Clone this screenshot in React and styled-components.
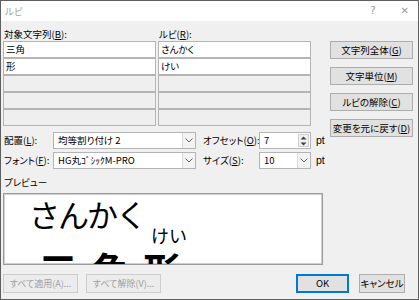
import React from "react";
import styled, { createGlobalStyle } from "styled-components";

const GlobalStyle = createGlobalStyle`
  html, body {
    margin: 0;
    padding: 0;
    background: #fff;
  }
  body {
    font-family: "Noto Sans CJK JP", "Noto Sans", sans-serif;
    font-size: 9.5px;
    font-feature-settings: "palt";
    color: #000;
  }
  * {
    box-sizing: border-box;
  }
`;

const rows = [
  { base: "三角", ruby: "さんかく" },
  { base: "形", ruby: "けい" },
  null,
  null,
  null,
];

const sideButtons = [
  ["文字列全体(", "G", ")"],
  ["文字単位(", "M", ")"],
  ["ルビの解除(", "C", ")"],
  ["変更を元に戻す(", "D", ")"],
];

const Chevron = () => (
  <svg width="8" height="5" viewBox="0 0 8 5">
    <path d="M0.5 0.5 L4 4 L7.5 0.5" fill="none" stroke="#606060" strokeWidth="1" />
  </svg>
);

const Spinner = () => (
  <svg width="7" height="12" viewBox="0 0 7 12">
    <path d="M0.5 4.5 L3.5 1.5 L6.5 4.5 Z" fill="#404040" />
    <path d="M0.5 7.5 L3.5 10.5 L6.5 7.5 Z" fill="#404040" />
  </svg>
);

const App = () => {
  return (
    <>
      <GlobalStyle />
      <Window>
        <TitleBar>
          <Title>ルビ</Title>
          <TitleIcons>
            <TitleIcon>?</TitleIcon>
            <TitleIcon>✕</TitleIcon>
          </TitleIcons>
        </TitleBar>

        <Body>
          <Main>
            <LeftColumn>
              <HeadRow>
                <span>
                  対象文字列(<U>B</U>):
                </span>
                <span>
                  ルビ(<U>R</U>):
                </span>
              </HeadRow>
              <Table>
                {rows.map((r, i) => (
                  <React.Fragment key={i}>
                    <Cell $empty={!r}>{r ? r.base : ""}</Cell>
                    <Cell $empty={!r}>{r ? r.ruby : ""}</Cell>
                  </React.Fragment>
                ))}
              </Table>

              <ControlRows>
                <ControlRow>
                  <Label $w={49}>
                    配置(<U>L</U>):
                  </Label>
                  <Select $w={143}>
                    <SelectText>均等割り付け 2</SelectText>
                    <DropButton>
                      <Chevron />
                    </DropButton>
                  </Select>
                  <Label $w={56} $ml={7}>
                    オフセット(<U>O</U>):
                  </Label>
                  <Select $w={52}>
                    <SelectText>7</SelectText>
                    <SpinButton>
                      <Spinner />
                    </SpinButton>
                  </Select>
                  <Unit>pt</Unit>
                </ControlRow>
                <ControlRow>
                  <Label $w={49}>
                    フォント(<U>F</U>):
                  </Label>
                  <Select $w={143}>
                    <SelectText>HG丸ｺﾞｼｯｸM-PRO</SelectText>
                    <DropButton>
                      <Chevron />
                    </DropButton>
                  </Select>
                  <Label $w={56} $ml={7}>
                    サイズ(<U>S</U>):
                  </Label>
                  <Select $w={52}>
                    <SelectText>10</SelectText>
                    <DropButton>
                      <Chevron />
                    </DropButton>
                  </Select>
                  <Unit>pt</Unit>
                </ControlRow>
              </ControlRows>

              <PreviewLabel>プレビュー</PreviewLabel>
              <Preview>
                <RubyLine>
                  <BigKana>さんかく</BigKana>
                  <SmallKana>けい</SmallKana>
                </RubyLine>
                <BaseLine>
                  <BaseChar>三</BaseChar>
                  <BaseChar>角</BaseChar>
                  <BaseChar>形</BaseChar>
                </BaseLine>
              </Preview>
            </LeftColumn>

            <SideButtons>
              {sideButtons.map(([a, b, c]) => (
                <Button key={b} $w={83}>
                  {a}
                  <U>{b}</U>
                  {c}
                </Button>
              ))}
            </SideButtons>
          </Main>

          <BottomRow>
            <Button $w={75} $h={19} $fs={9} disabled>
              すべて適用(A)...
            </Button>
            <Button $w={75} $h={19} $fs={9} disabled>
              すべて解除(V)...
            </Button>
            <Spacer />
            <Button $w={53} $h={19} $default>
              OK
            </Button>
            <Button $w={46} $h={19}>
              キャンセル
            </Button>
          </BottomRow>
        </Body>
      </Window>
    </>
  );
};

export default App;

/* ---------------- Styled Components ---------------- */
const Window = styled.div`
  width: 419px;
  height: 300px;
  border: 1px solid #5f5f5f;
  display: flex;
  flex-direction: column;
  background: #f0f0f0;
  overflow: hidden;
`;

const TitleBar = styled.div`
  height: 20px;
  flex: none;
  background: #fff;
  display: flex;
  align-items: center;
  justify-content: space-between;
  padding: 0 9px 0 4px;
`;

const Title = styled.span`
  color: #a3a3a3;
  font-size: 9.5px;
  line-height: 12px;
`;

const TitleIcons = styled.div`
  display: flex;
  align-items: center;
  gap: 25px;
`;

const TitleIcon = styled.span`
  color: #9a9a9a;
  font-family: "DejaVu Sans", sans-serif;
  font-size: 10px;
  line-height: 12px;
`;

const Body = styled.div`
  flex: 1;
  display: flex;
  flex-direction: column;
  padding: 6px 4px 0 2px;
`;

const U = styled.span`
  text-decoration: underline;
  text-underline-offset: 1px;
`;

const Main = styled.div`
  display: flex;
  align-items: flex-start;
`;

const LeftColumn = styled.div`
  width: 326px;
  display: flex;
  flex-direction: column;
`;

const HeadRow = styled.div`
  width: 308px;
  height: 14px;
  display: grid;
  grid-template-columns: 155px 153px;
  align-items: center;
  line-height: 13px;
  padding-left: 1px;
`;

const Table = styled.div`
  width: 308px;
  display: grid;
  grid-template-columns: 153px 153px;
  grid-auto-rows: 17px;
  column-gap: 2px;
`;

const Cell = styled.div`
  border: 1px solid #b4b4b4;
  background: ${(p) => (p.$empty ? "#efefef" : "#fff")};
  padding: 0 2px;
  line-height: 15px;
  white-space: nowrap;
  overflow: hidden;
`;

const SideButtons = styled.div`
  margin-left: 1px;
  padding-top: 14px;
  display: flex;
  flex-direction: column;
  gap: 8px;
`;

const Button = styled.button`
  width: ${(p) => p.$w}px;
  height: ${(p) => p.$h || 18}px;
  padding: 0;
  margin: 0;
  font-family: "Noto Sans CJK JP", "Noto Sans", sans-serif;
  font-size: ${(p) => p.$fs || 9.5}px;
  font-feature-settings: "palt";
  line-height: 13px;
  color: #000;
  background: #e1e1e1;
  border: 1px solid ${(p) => (p.$default ? "#0078d7" : "#adadad")};
  box-shadow: ${(p) => (p.$default ? "inset 0 0 0 1px #0078d7" : "none")};
  border-radius: 0;
  white-space: nowrap;
  overflow: hidden;
  display: flex;
  align-items: center;
  justify-content: center;

  &:disabled {
    color: #a0a0a0;
    background: #ececec;
    border-color: #cdcdcd;
  }
`;

const ControlRows = styled.div`
  margin-top: 6px;
  display: flex;
  flex-direction: column;
  gap: 3px;
`;

const ControlRow = styled.div`
  height: 17px;
  display: flex;
  align-items: center;
  padding-left: 1px;
`;

const Label = styled.span`
  width: ${(p) => p.$w}px;
  margin-left: ${(p) => p.$ml || 0}px;
  flex: none;
  white-space: nowrap;
  line-height: 13px;
`;

const Select = styled.div`
  width: ${(p) => p.$w}px;
  height: 17px;
  flex: none;
  border: 1px solid #b4b4b4;
  background: #fff;
  display: flex;
  align-items: stretch;
`;

const SelectText = styled.span`
  flex: 1;
  padding-left: 4px;
  line-height: 15px;
  white-space: nowrap;
  overflow: hidden;
`;

const DropButton = styled.span`
  width: 13px;
  flex: none;
  border-left: 1px solid #d9d9d9;
  background: #f3f3f3;
  display: flex;
  align-items: center;
  justify-content: center;
`;

const SpinButton = styled(DropButton)`
  width: 11px;
  margin: 1px 1px 1px 0;
  border: 1px solid #cfcfcf;
  background: #f0f0f0;
`;

const Unit = styled.span`
  margin-left: 5px;
  font-family: "Liberation Sans", "Noto Sans", sans-serif;
  font-size: 10.5px;
  line-height: 13px;
`;

const PreviewLabel = styled.div`
  height: 24px;
  display: flex;
  align-items: flex-end;
  padding: 0 0 4px 1px;
  line-height: 13px;
`;

const Preview = styled.div`
  width: 320px;
  height: 72px;
  border: 1px solid #9c9c9c;
  box-shadow: inset 0 0 0 1px #cfcfcf;
  background: #fff;
  overflow: hidden;
  display: flex;
  flex-direction: column;
  font-family: "Noto Sans CJK JP", sans-serif;
  font-feature-settings: normal;
`;

const RubyLine = styled.div`
  display: flex;
  align-items: flex-end;
  padding: 0 0 0 25px;
  height: 58px;
  flex: none;
`;

const BigKana = styled.span`
  align-self: flex-start;
  font-size: 31px;
  line-height: 40px;
  letter-spacing: -2px;
`;

const SmallKana = styled.span`
  margin-left: 6px;
  font-size: 18px;
  line-height: 22px;
  margin-bottom: 6px;
`;

const BaseLine = styled.div`
  display: flex;
  padding-left: 35px;
  gap: 17px;
  margin-top: -5px;
`;

const BaseChar = styled.span`
  width: 35px;
  font-size: 38px;
  line-height: 44px;
  font-weight: 700;
`;

const BottomRow = styled.div`
  margin-top: 9px;
  display: flex;
  gap: 8px;
  padding-right: 9px;

  & > button:last-child {
    margin-left: 2px;
  }
`;

const Spacer = styled.div`
  flex: 1;
`;
